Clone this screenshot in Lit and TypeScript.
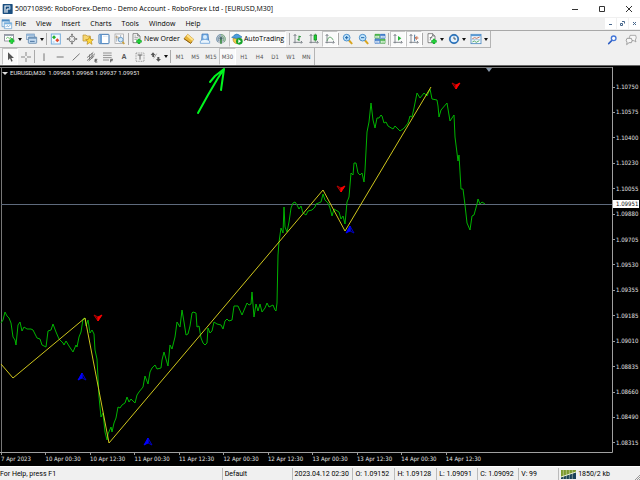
import { LitElement, html, css, svg, nothing } from "lit";
import { customElement } from "lit/decorators.js";
import { classMap } from "lit/directives/class-map.js";

// Every glyph is drawn on a 36 x 36 grid.
const plus = (x: number, y: number) => svg`<path d="M${x - 8} ${y}h16M${x} ${y - 8}v16" stroke="#0a9a1a" stroke-width="7"/><path d="M${x - 7} ${y}h14M${x} ${y - 7}v14" stroke="#22d63c" stroke-width="4"/>`;
const page = svg`<path d="M6 2h14l7 7v20H6z" fill="#fff" stroke="#555" stroke-width="2"/><path d="M20 2v7h7" fill="#ccc" stroke="#555" stroke-width="2"/>`;
const axes = svg`<path d="M9 5v26M5 9l4-5 4 5M4 28h26M27 24l4 4-4 4" fill="none" stroke="#6a7078" stroke-width="2.4"/>`;
const lens = (c: string) => svg`<path d="M20 21l9 10" stroke="#d9a520" stroke-width="6" stroke-linecap="round"/><circle cx="14" cy="14" r="10" fill="#bfe3fb" stroke="${c}" stroke-width="3"/>`;

const icons: Record<string, unknown> = {
  app: svg`<rect x="2" y="3" width="30" height="30" rx="2" fill="#1b4f80"/><path d="M9 29V9h14v9h-8M15 18v11" fill="none" stroke="#fff" stroke-width="3.4"/><path d="M23 9v9" stroke="#7db4e0" stroke-width="3"/>`,
  doc: svg`<path d="M3 5h22v21H3z" fill="#e8f4fd" stroke="#4d8cc4" stroke-width="2"/><path d="M3 8h22" stroke="#4d8cc4" stroke-width="5"/><path d="M10 14h22v18H10z" fill="#fff" stroke="#5a98cd" stroke-width="2"/><path d="M10 17h22" stroke="#76b0df" stroke-width="4"/><path d="M13 28l5-5 5 3 6-6" fill="none" stroke="#468bc7" stroke-width="2"/>`,
  chart: svg`<rect x="2" y="4" width="26" height="20" fill="#fff" stroke="#667" stroke-width="2"/><path d="M2 7h26" stroke="#9aa6b2" stroke-width="4"/><path d="M6 17l5-4 5 3 6-4" fill="none" stroke="#2aa52a" stroke-width="2"/>${plus(23, 24)}`,
  profiles: svg`<rect x="2" y="3" width="23" height="17" fill="#dceaf8" stroke="#6f93b8" stroke-width="2"/><path d="M2 6h23" stroke="#7ea7d0" stroke-width="4"/><rect x="7" y="12" width="25" height="19" rx="2" fill="#c3daf0" stroke="#47729f" stroke-width="2"/><path d="M8 15h23M12 25h14" stroke="#47729f" stroke-width="3"/>`,
  market: svg`<rect x="4" y="3" width="27" height="30" fill="#f3faff" stroke="#77aedb" stroke-width="3"/><path d="M12 7l6 6-6 6-6-6z" fill="#20b02a"/><path d="M22 16l6 6-6 6-6-6z" fill="#e3482b"/><path d="M8 27h6" stroke="#77aedb" stroke-width="2"/>`,
  target: svg`<circle cx="18" cy="18" r="9" fill="none" stroke="#777" stroke-width="2.6"/><path d="M18 3v11M18 22v11M3 18h11M22 18h11" stroke="#777" stroke-width="2.4"/><path d="M18 1l4 6h-8zM18 35l4-6h-8zM1 18l6-4v8zM35 18l-6-4v8z" fill="#777"/>`,
  navigator: svg`<path d="M3 6h9l3 3h10v15H3z" fill="#f6d672" stroke="#b98e28" stroke-width="2"/><path d="M23 11l3 8 8 1-6 5 2 9-7-5-8 5 2-9-6-5 8-1z" fill="#ffd93d" stroke="#b5881b" stroke-width="2"/>`,
  terminal: svg`<rect x="3" y="4" width="30" height="28" rx="2" fill="#fff" stroke="#3f78b4" stroke-width="3"/><path d="M9 5v26" stroke="#6fa2d6" stroke-width="6"/><path d="M15 10h14" stroke="#c4d9ee" stroke-width="2"/>`,
  tester: svg`<rect x="3" y="3" width="25" height="28" fill="#fafafa" stroke="#999" stroke-width="2"/><path d="M8 7v19M14 11v14M20 6v11" stroke="#8293a7" stroke-width="2"/><path d="M5 12h6M11 16h6" stroke="#b78c49" stroke-width="3"/><path d="M25 26l6 7" stroke="#c9a141" stroke-width="5"/><circle cx="20" cy="20" r="7" fill="#cbe6f8" fill-opacity=".85" stroke="#5f93c3" stroke-width="2.5"/>`,
  order: svg`${page}<path d="M10 9h6M10 14h12M10 19h10" stroke="#777" stroke-width="2"/>${plus(24, 25)}`,
  gold: svg`<path d="M3 17L14 4l18 15-9 12z" fill="#e9b638" stroke="#a77516" stroke-width="2"/><path d="M14 4l18 15-4 5L10 9z" fill="#ffe28a"/><path d="M3 17l20 14 3-3" fill="none" stroke="#8b5e10" stroke-width="3"/>`,
  expert: svg`<path d="M9 3h18l2 18H8z" fill="#77aee6" stroke="#3a73b5" stroke-width="2"/><circle cx="18" cy="12" r="6" fill="#d8ecfd"/><path d="M4 24q14-10 28 0v7H4z" fill="#eaf4fd" stroke="#6ca2d8" stroke-width="2.4"/>`,
  signal: svg`<circle cx="18" cy="18" r="14" fill="#b8c2c8"/><path d="M18 4a14 14 0 0 0-10 23M18 9a9 9 0 0 0-6 15" fill="none" stroke="#7190ad" stroke-width="2.6"/><path d="M18 4a14 14 0 0 1 10 23M18 9a9 9 0 0 1 6 15" fill="none" stroke="#70a777" stroke-width="2.6"/><path d="M18 16v16" stroke="#3e8d45" stroke-width="5"/><circle cx="18" cy="16" r="4" fill="#466"/>`,
  auto: svg`<path d="M6 16q0 16 13 16 10-3 11-16z" fill="#f2ca4d" stroke="#b58b20" stroke-width="2"/><path d="M2 13Q17 20 33 12 27 9 25 6 17 0 9 7 8 11 2 13z" fill="#4d9fdd" stroke="#2d75ae" stroke-width="2"/><circle cx="25" cy="25" r="10" fill="#18a42b"/><path d="M22 19l8 6-8 6z" fill="#fff"/>`,
  bars: svg`${axes}<path d="M21 8v16M16 20h5M21 11h6" stroke="#1c8b2c" stroke-width="2.8"/>`,
  candles: svg`${axes}<path d="M22 2v24" stroke="#167b23" stroke-width="2"/><rect x="18" y="6" width="8" height="15" fill="#1bd331" stroke="#167b23" stroke-width="2"/>`,
  line: svg`${axes}<path d="M9 24q4-13 9-12 6 1 10 10" fill="none" stroke="#4e9a58" stroke-width="2.4"/>`,
  zoomin: svg`${lens("#4a8fcc")}<path d="M9 14h10M14 9v10" stroke="#1f64a8" stroke-width="3"/>`,
  zoomout: svg`${lens("#4a8fcc")}<path d="M9 14h10" stroke="#1f64a8" stroke-width="3"/>`,
  tiles: svg`<g stroke-width="2" fill="#fff"><path d="M3 4h14v12H3zM19 18h14v13H19z" stroke="#2c9a2c"/><path d="M19 4h14v12H19zM3 18h14v13H3z" stroke="#2b6dc4"/></g><path d="M3 6h14M19 21h14" stroke="#37ad37" stroke-width="5"/><path d="M19 6h14M3 21h14" stroke="#2b6dc4" stroke-width="5"/><path d="M6 12h8M22 27h8" stroke="#37ad37" stroke-width="2"/><path d="M22 12h8M6 27h8" stroke="#2b6dc4" stroke-width="2"/>`,
  scroll: svg`${axes}<path d="M18 9l10 7-10 7z" fill="#22b535"/>`,
  shift: svg`${axes}<path d="M20 5v20" stroke="#47759c" stroke-width="3"/><path d="M31 15h-8M27 10l-5 5 5 5" fill="none" stroke="#c0552d" stroke-width="3"/>`,
  indicators: svg`${page}<path d="M12 22q2-13 8-13M11 14h8" fill="none" stroke="#555" stroke-width="2"/>${plus(24, 25)}`,
  clock: svg`<circle cx="18" cy="18" r="14" fill="#2777c5" stroke="#1a599b" stroke-width="2"/><circle cx="18" cy="18" r="10" fill="#e6f2fc"/><path d="M18 11v7h6" fill="none" stroke="#345" stroke-width="2.6"/>`,
  template: svg`<rect x="3" y="4" width="30" height="28" fill="#f4faff" stroke="#4583bd" stroke-width="2.4"/><path d="M3 7h30" stroke="#5a9ad5" stroke-width="5"/><path d="M7 17l7-3 6 2 9-4" fill="none" stroke="#b2543b" stroke-width="2.4"/><path d="M5 20h26" stroke="#8cb2d3" stroke-width="2"/><path d="M7 27l6-3 6 4 9-5" fill="none" stroke="#3a9a48" stroke-width="2.4"/>`,
  search: svg`<path d="M17 20L8 29" stroke="#2f5fc4" stroke-width="4.6" stroke-linecap="round"/><circle cx="23" cy="13" r="7" fill="#fff" stroke="#4477d8" stroke-width="4"/>`,
  chat: svg`<path d="M15 4h17q4 8-1 14l2 6-6-4H17q-7-9-2-16z" fill="#f7f7f7" stroke="#999" stroke-width="2.4"/><path d="M6 13h13q5 7 0 13h-7l-7 6 1-7q-5-6 0-12z" fill="#f7f7f7" stroke="#888" stroke-width="2.4"/>`,
  cursor: svg`<path d="M12 4v24l6-6 4 10 4-2-4-9h8z" fill="#555"/>`,
  cross: svg`<path d="M18 3v12M18 21v12M3 18h12M21 18h12" stroke="#777" stroke-width="2.6"/>`,
  vline: svg`<path d="M18 7v23" stroke="#777" stroke-width="3"/>`,
  hline: svg`<path d="M8 18h21" stroke="#777" stroke-width="3"/>`,
  tline: svg`<path d="M8 28L29 8" stroke="#777" stroke-width="3"/>`,
  channel: svg`<path d="M3 20L22 4M3 29L27 8M8 30l17-15M11 10v16M18 6v16" stroke="#666" stroke-width="2.4"/><path d="M34 25h-7v8h7M27 29h6" fill="none" stroke="#444" stroke-width="2.4"/>`,
  fibo: svg`<path d="M3 6h26M3 13h26M3 20h26M3 27h18" stroke="#777" stroke-width="2.4"/><path d="M26 34V25h7M26 29h6" fill="none" stroke="#444" stroke-width="2.4"/>`,
  label: svg`<rect x="6" y="6" width="24" height="25" fill="none" stroke="#777" stroke-width="2" stroke-dasharray="3 2"/><path d="M11 12h14M18 12v14" stroke="#666" stroke-width="3"/>`,
  arrows: svg`<path d="M9 4l7 8-4 1v5H7v-5l-5-1z" fill="#555"/><path d="M25 32l-7-8h4v-6h6v6h5z" fill="#555"/><path d="M20 8l-9 14" stroke="#777" stroke-width="2"/>`,
};

const icon = (name: string) => html`<svg class="icon" viewBox="0 0 36 36" aria-hidden="true">${icons[name]}</svg>`;

const prices = "1.10750 1.10575 1.10400 1.10230 1.10055 1.09880 1.09705 1.09530 1.09355 1.09185 1.09010 1.08835 1.08660 1.08490 1.08315".split(" ");
const times = ["7 Apr 2023", "10 Apr 00:30", "10 Apr 12:30", "11 Apr 00:30", "11 Apr 12:30", "12 Apr 00:30", "12 Apr 12:30", "13 Apr 00:30", "13 Apr 12:30", "14 Apr 00:30", "14 Apr 12:30"];

const closeLine =
  "1,323 3,320 5,312 7,316 9,318 11,323 13,337 15,340 16,345 18,325 20,322 22,331 24,327 27,329 31,329 33,330 35,334 37,338 40,339 42,345 46,347 48,331 51,330 53,324 56,332 59,339 63,343 64,345 66,341 69,346 73,352 76,345 77,347 79,337 81,332 83,319 85,318 86,326 88,320 90,333 92,330 94,334 95,350 97,359 99,397 101,417 103,413 105,432 107,440 108,434 111,427 112,432 114,423 116,418 118,407 120,408 122,405 125,403 127,397 129,402 131,399 135,403 137,395 139,392 143,387 145,376 148,384 150,372 152,368 155,365 157,369 161,368 162,360 164,352 168,366 170,345 172,349 175,337 177,322 180,327 182,310 184,322 186,335 188,334 190,326 192,313 193,312 196,313 197,327 199,326 201,338 203,343 205,345 207,343 208,328 210,333 212,331 214,322 217,324 221,325 223,329 225,321 227,319 229,321 232,320 234,306 238,306 242,315 247,303 249,305 251,304 252,292 254,317 256,304 258,311 260,304 262,312 265,308 267,303 269,307 273,305 275,310 276,311 277,303 278,255 279,242 281,228 283,233 284,207 285,227 287,232 289,222 291,208 293,203 295,202 297,205 299,209 301,206 303,213 306,215 308,211 312,210 315,207 316,204 321,202 323,194 325,200 328,203 330,208 332,216 334,209 339,212 341,219 343,216 345,224 347,202 349,197 351,173 353,175 354,163 356,163 358,173 360,175 362,173 364,182 365,170 367,132 369,122 371,103 373,120 375,128 377,118 379,118 381,115 382,116 384,123 386,122 388,126 393,129 395,126 400,131 403,129 405,127 408,123 410,116 412,117 414,108 416,98 417,93 420,98 424,93 427,96 430,89 432,99 437,100 438,106 439,117 441,110 447,103 450,121 452,118 454,115 455,137 458,161 459,155 461,189 463,189 465,205 467,223 470,230 472,216 474,215 477,204 478,199 480,204 482,202 485,204";
const zigzag = "1,364 13,378 85,318 109,443 323,190 345,231 431,87";
const sells = [[98, 318], [341, 189], [456, 86]];
const buys = [[82, 377], [148, 442], [350, 230]];

@customElement("price-chart")
class PriceChart extends LitElement {
  static styles = css`
    :host { display: grid; grid-template: minmax(0, 1fr) 13px / minmax(0, 1fr) 27px; position: relative; background: #000; color: #e4e4e4; font: 6px/8px "DejaVu Sans Condensed", "DejaVu Sans", sans-serif; }
    .plot { display: block; width: 100%; height: 100%; min-height: 0; }
    .prices { display: flex; flex-direction: column; justify-content: space-between; padding: 17px 0 6px 1px; }
    .price { display: flex; align-items: center; gap: 1px; }
    .price::before { content: ""; width: 2px; height: 1px; background: #999; margin-left: -1px; }
    .times { display: flex; width: 80%; padding-left: 1px; box-sizing: border-box; }
    .time { flex: 1 1 0; white-space: nowrap; padding-top: 2px; position: relative; }
    .time::before { content: ""; position: absolute; left: 0; top: 0; width: 1px; height: 2px; background: #999; }
    .quote { position: absolute; left: 2px; top: 3px; margin: 0; display: flex; align-items: center; gap: 2px; font: 6px/8px Roboto, "Liberation Sans", sans-serif; white-space: pre; }
    .caret { border: 3px solid transparent; border-top: 3px solid #ddd; border-bottom: 0; }
    .last { position: absolute; right: 1px; top: 33.5%; width: 26px; height: 8px; box-sizing: border-box; padding-left: 3px; background: #fff; color: #111; }
  `;
  render() {
    return html`
      <svg class="plot" viewBox="0 66 613 387" preserveAspectRatio="none" role="img" aria-label="EURUSD M30 line chart">
        <path d="M0 67.5H612.5M1.5 67V452" fill="none" stroke="#777"/>
        <path d="M612.5 67V452.5H0" fill="none" stroke="#a0a0a0"/>
        <path d="M486 68h6l-3 4z" fill="#8796a8"/>
        <path d="M1 204.5H612" stroke="#5e6a7c"/>
        <polyline points="${closeLine}" fill="none" stroke="#00b400"/>
        <polyline points="${zigzag}" fill="none" stroke="#cfc61c"/>
        ${sells.map(([x, y]) => svg`<g transform="translate(${x} ${y})"><path d="M0 3L-4-3 0-1z" fill="#500" stroke="#b00"/><path d="M0 3L4-3 0-1z" fill="#f00" stroke="#f00"/></g>`)}
        ${buys.map(([x, y]) => svg`<g transform="translate(${x} ${y})"><path d="M0-4L4 3 0 1z" fill="#003" stroke="#0000c0"/><path d="M0-4L-4 3 0 1z" fill="#00f" stroke="#00f"/></g>`)}
        <path d="M198 113l10-18 10-17 6-9M210 82l5-6 9-7M224 69l-3 21" fill="none" stroke="#00f51e" stroke-width="2" stroke-linecap="round" stroke-linejoin="round"/>
      </svg>
      <div class="prices">${prices.map((p) => html`<span class="price">${p}</span>`)}</div>
      <div class="times">${times.map((t) => html`<span class="time">${t}</span>`)}</div>
      <h2 class="quote"><span class="caret"></span>EURUSD,M30  1.09968 1.09968 1.09937 1.09951</h2>
      <span class="last">1.09951</span>
    `;
  }
}

@customElement("app-root")
class AppRoot extends LitElement {
  static styles = css`
    :host { display: flex; flex-direction: column; min-height: 100vh; background: #f0f0f0; color: #000; font: 7px/10px "Open Sans", "Noto Sans", sans-serif; }
    button { all: unset; box-sizing: border-box; display: flex; align-items: center; justify-content: center; }
    .icon { width: 12px; height: 12px; flex: none; }
    .title { display: flex; align-items: center; gap: 5px; height: 17px; background: #fff; padding-left: 2px; }
    .caption { display: flex; align-items: center; gap: 1px; margin-right: auto; }
    .caption h1 { margin: 0; font: inherit; }
    .win { width: 22px; height: 17px; }
    .glyph { width: 8px; height: 8px; fill: none; stroke: #333; }
    .menu { display: flex; align-items: center; height: 14px; padding-left: 1px; box-sizing: border-box; border-bottom: 1px solid #a8a8a8; }
    .menu nav { display: flex; gap: 10px; margin: 0 auto 0 2px; }
    .mdi { width: 11px; height: 11px; background: #fff; margin-left: 1px; }
    .mdi .glyph { width: 5px; height: 5px; stroke: #47678c; }
    .bar { display: flex; align-items: stretch; height: 17px; }
    .group { display: flex; align-items: stretch; box-sizing: border-box; padding-left: 2px; border-right: 1px solid #b4b4b4; border-bottom: 1px solid #b4b4b4; }
    .second .group { border-bottom: 0; }
    .tool { width: 16px; }
    .drop { width: 22px; gap: 1px; }
    .caret { border: 2px solid transparent; border-top: 3px solid #111; border-bottom: 0; width: 0; margin: 0 1px; }
    .sep { width: 1px; margin: 2px 1px 2px 0; background: #aaa; }
    .gap { width: 4px; margin: 2px 0; box-sizing: border-box; border-right: 1px solid #aaa; }
    .wide { gap: 1px; white-space: nowrap; }
    .neworder { width: 51px; }
    .auto { width: 57px; }
    .on { background: #fafafa; border: 1px solid #c4c4c4; border-right-color: #fff; border-bottom-color: #fff; }
    .extra { display: flex; margin-left: auto; }
    .extra .tool { width: 19px; }
    .frames { display: flex; width: 142px; color: #555; font: 6px/8px "DejaVu Sans Condensed", "DejaVu Sans", sans-serif; }
    .frames button { flex: 1 1 0; }
    .letter { font: bold 7px/8px "Liberation Sans", sans-serif; color: #555; }
    .edge { height: 1px; background: #666; }
    price-chart { flex: 1 1 auto; min-height: 240px; }
    .status { display: grid; grid-template-columns: 222fr 70fr 61fr 42fr 42fr 41fr 41fr 40fr 82fr; align-items: center; height: 14px; border-top: 1px solid #fff; font-family: Roboto, "Liberation Sans", sans-serif; }
    .cell { display: flex; align-items: center; box-sizing: border-box; min-width: 0; height: 12px; padding-left: 2px; border-left: 1px solid #bbb; white-space: nowrap; }
    .cell:first-child { border: 0; padding: 0; }
    .traffic { width: 15px; height: 9px; margin-right: 2px; }
    .grip { width: 5px; height: 5px; margin-left: auto; align-self: flex-end; stroke: #999; }
  `;
  tool(name: string, on = false) {
    return html`<button class=${classMap({ tool: true, on })} aria-label=${name}>${icon(name)}</button>`;
  }
  drop(name: string) {
    return html`<button class="drop" aria-label=${name}>${icon(name)}<span class="caret"></span></button>`;
  }
  render() {
    const sep = html`<span class="sep"></span>`;
    return html`
      <header class="title">
        <div class="caption">${icon("app")}<h1>500710896: RoboForex-Demo - Demo Account - RoboForex Ltd - [EURUSD,M30]</h1></div>
        <button class="win" aria-label="Minimize"><svg class="glyph" viewBox="0 0 8 8"><path d="M1 4.5h6"/></svg></button>
        <button class="win" aria-label="Maximize"><svg class="glyph" viewBox="0 0 8 8"><path d="M1.5 1.5h5v5h-5z"/></svg></button>
        <button class="win" aria-label="Close"><svg class="glyph" viewBox="0 0 8 8"><path d="M1 1l6 6M7 1l-6 6"/></svg></button>
      </header>
      <div class="menu">
        ${icon("doc")}
        <nav>${["File", "View", "Insert", "Charts", "Tools", "Window", "Help"].map((m) => html`<button>${m}</button>`)}</nav>
        <button class="mdi" aria-label="Minimize chart"><svg class="glyph" viewBox="0 0 5 5"><path d="M1 3.5h3"/></svg></button>
        <button class="mdi" aria-label="Restore chart"><svg class="glyph" viewBox="0 0 5 5"><path d="M.5 2.5h2v2h-2zM2 .5h2.5v2"/></svg></button>
        <button class="mdi" aria-label="Close chart"><svg class="glyph" viewBox="0 0 5 5"><path d="M1 1l3 3M4 1l-3 3"/></svg></button>
      </div>
      <div class="bar">
        <div class="group">
          ${this.drop("chart")}${this.drop("profiles")}${sep}
          ${["market", "target", "navigator", "terminal", "tester"].map((n) => this.tool(n))}${sep}
          <button class="wide neworder">${icon("order")}New Order</button>
          ${["gold", "expert", "signal"].map((n) => this.tool(n))}
          <button class="wide auto on">${icon("auto")}AutoTrading</button>
          <span class="gap"></span>
          ${this.tool("bars")}${this.tool("candles")}${this.tool("line", true)}${sep}
          ${["zoomin", "zoomout", "tiles"].map((n) => this.tool(n))}${sep}
          ${this.tool("scroll", true)}${this.tool("shift", true)}${sep}
          ${["indicators", "clock", "template"].map((n) => this.drop(n))}
        </div>
        <div class="extra">${this.tool("search")}${this.tool("chat")}</div>
      </div>
      <div class="bar second">
        <div class="group">
          ${this.tool("cursor", true)}${this.tool("cross")}${sep}
          ${["vline", "hline", "tline", "channel", "fibo"].map((n) => this.tool(n))}
          <button class="tool letter">A</button>
          ${this.tool("label")}${this.drop("arrows")}${sep}
          <div class="frames">${["M1", "M5", "M15", "M30", "H1", "H4", "D1", "W1", "MN"].map((f) => html`<button class=${f === "M30" ? "on" : nothing}>${f}</button>`)}</div>
        </div>
      </div>
      <div class="edge"></div>
      <price-chart></price-chart>
      <footer class="status">
        ${["For Help, press F1", "Default", "2023.04.12 02:30", "O: 1.09152", "H: 1.09128", "L: 1.09091", "C: 1.09092", "V: 99"].map((t) => html`<span class="cell">${t}</span>`)}
        <span class="cell">
          <svg class="traffic" viewBox="0 0 45 27" aria-hidden="true"><path d="M0 0h45v27H0z" fill="#7c9a2e"/><path d="M0 22L45 7v20H0z" fill="#1b4258"/><path d="M7 0v27M16 0v27M25 0v27M34 0v27" stroke="#dfe6c8" stroke-opacity=".5" stroke-width="3"/><path d="M0 21L45 6" stroke="#e6edd2" stroke-width="3"/></svg>
          1850/2 kb
          <svg class="grip" viewBox="0 0 5 5" aria-hidden="true"><path d="M0 5l5-5M2 5l3-3M4 5l1-1"/></svg>
        </span>
      </footer>
    `;
  }
}
